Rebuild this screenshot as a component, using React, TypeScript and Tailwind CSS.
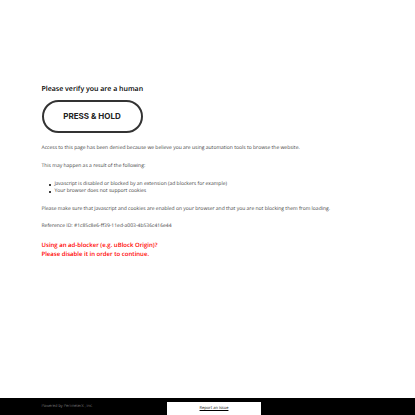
const reasons = [
  'Javascript is disabled or blocked by an extension (ad blockers for example)',
  'Your browser does not support cookies',
]

function PressAndHold() {
  return (
    <button
      type="button"
      className="mt-[5px] flex h-[33px] w-[101px] items-center justify-center rounded-full border-2 border-[#333] bg-white font-[Inter,sans-serif] text-[8px] font-bold text-[#222]"
    >
      PRESS &amp; HOLD
    </button>
  )
}

export default function App() {
  return (
    <div className="flex min-h-screen flex-col bg-white font-['Open_Sans',sans-serif] text-black [text-rendering:geometricPrecision]">
      <main className="grow px-[10%] pt-[84px] text-[5px] leading-[7px] font-normal text-[#444]">
        <h1 className="text-[7px] leading-[11px] font-[550] text-black">Please verify you are a human</h1>
        <PressAndHold />
        <p className="mt-[12px]">
          Access to this page has been denied because we believe you are using automation tools to browse the website.
        </p>
        <p className="mt-[11px]">This may happen as a result of the following:</p>
        <ul className="mt-[11px] pl-[7px]">
          {reasons.map(reason => (
            <li
              key={reason}
              className="flex items-center gap-[4px] before:size-[2px] before:shrink-0 before:rounded-full before:bg-black"
            >
              {reason}
            </li>
          ))}
        </ul>
        <p className="mt-[11px]">
          Please make sure that Javascript and cookies are enabled on your browser and that you are not blocking them from loading.
        </p>
        <p className="mt-[10px]">Reference ID: #1c85c8e6-ff39-11ed-a003-4b536c416e44</p>
        <p className="mt-[11px] text-[6px] leading-[9px] font-semibold text-[#f00]">
          Using an ad-blocker (e.g. uBlock Origin)?
          <br />
          Please disable it in order to continue.
        </p>
      </main>

      <footer className="relative flex h-[17px] items-center bg-black px-[10%]">
        <span className="text-[4px] leading-[6px] font-light text-[#aaa]">Powered by PerimeterX , Inc.</span>
        <div className="absolute bottom-0 left-[167px] flex h-[13px] w-[94px] items-center justify-center bg-white">
          <a href="#report" className="text-[4px] leading-[7px] font-medium text-black underline">
            Report an issue
          </a>
        </div>
      </footer>
    </div>
  )
}
